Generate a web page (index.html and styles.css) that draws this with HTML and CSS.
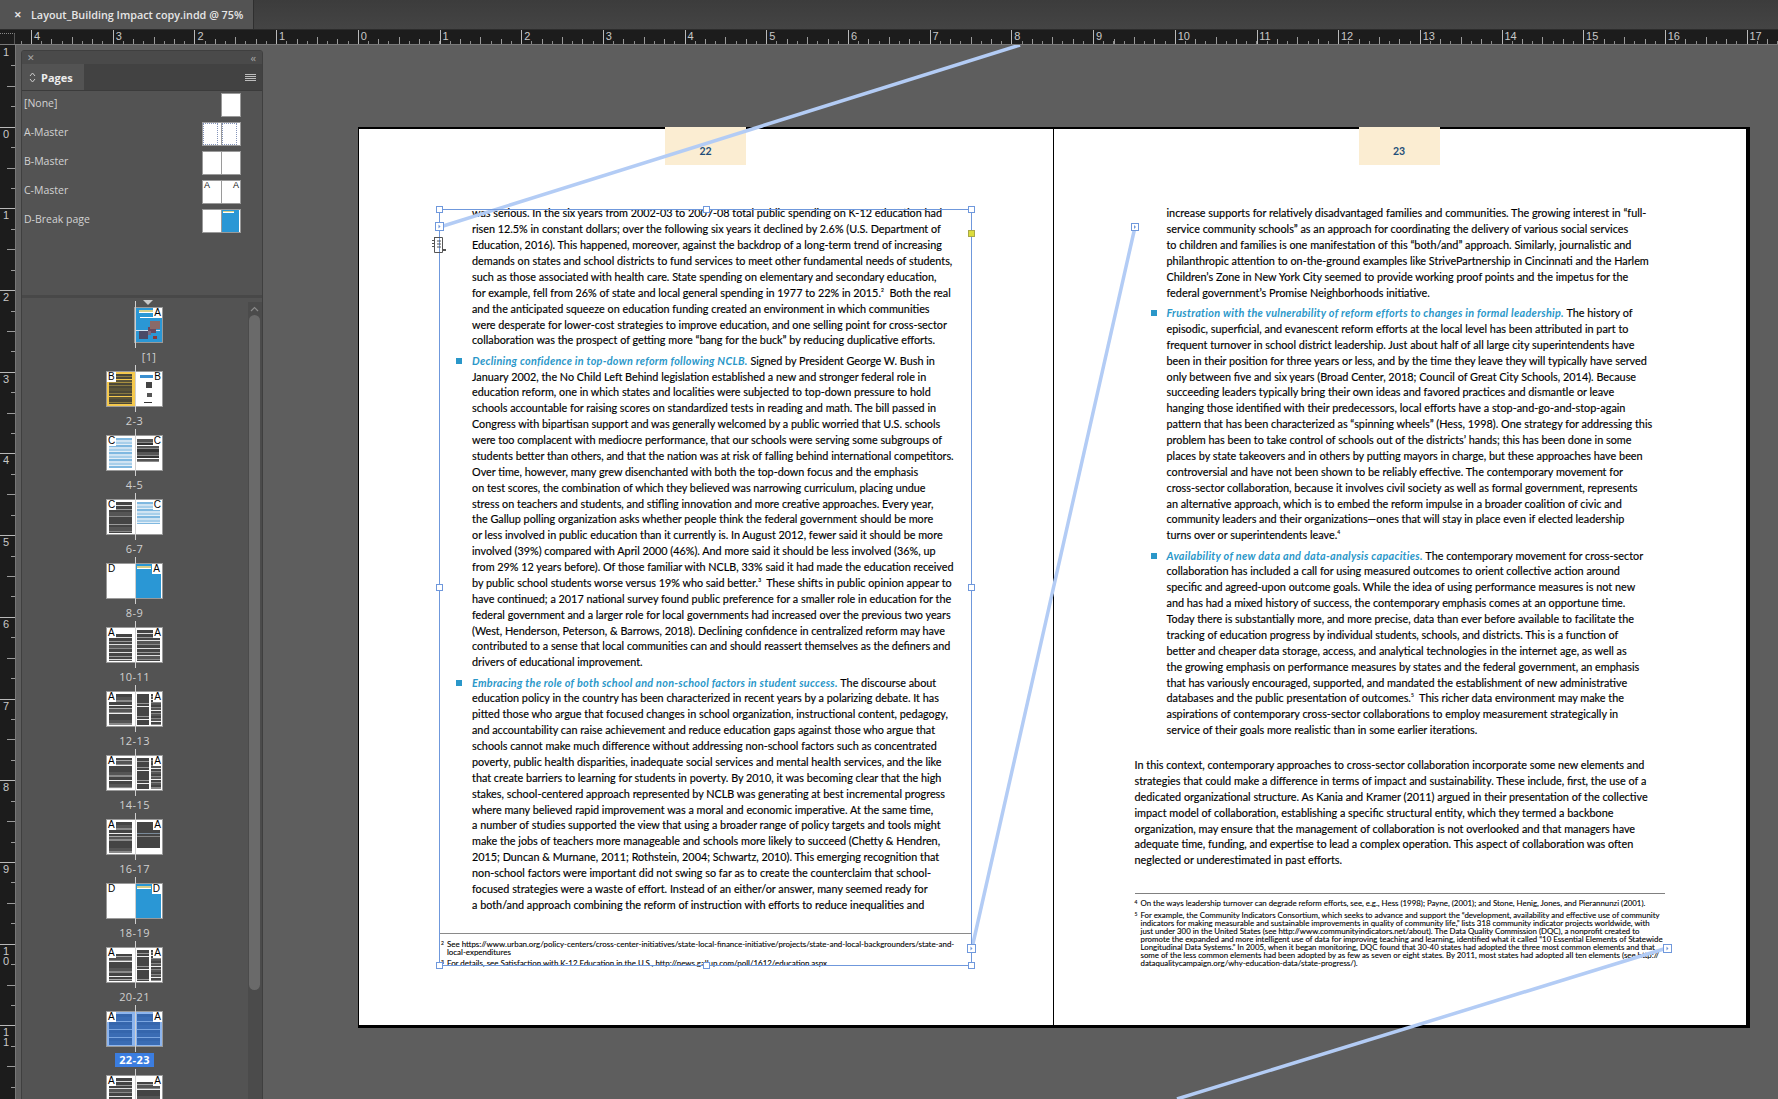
FILE: index.html
```html
<!DOCTYPE html>
<html lang="en">
<head>
<meta charset="utf-8">
<title>Layout_Building Impact copy.indd @ 75%</title>
<link rel="stylesheet" href="styles.css">
</head>
<body>
<div class="app">
  <header class="tabbar">
    <div class="doc-tab"><span class="doc-x">✕</span><span>Layout_Building Impact copy.indd @ 75%</span></div>
  </header>
  <div class="hruler">
    <div class="corner"></div>
    <div class="hticks">
      <span>4</span><span>3</span><span>2</span><span>1</span><span>0</span><span>1</span><span>2</span><span>3</span><span>4</span><span>5</span><span>6</span><span>7</span><span>8</span><span>9</span><span>10</span><span>11</span><span>12</span><span>13</span><span>14</span><span>15</span><span>16</span><span>17</span>
    </div>
  </div>
  <div class="main">
    <aside class="vruler">
      <span>1</span><span>0</span><span>1</span><span>2</span><span>3</span><span>4</span><span>5</span><span>6</span><span>7</span><span>8</span><span>9</span><span class="two">1<br>0</span><span class="two">1<br>1</span>
    </aside>
    <section class="canvas">
      <div class="panel">
        <div class="panel-top"><span class="panel-x">✕</span><span class="panel-collapse">‹‹</span></div>
        <div class="panel-tabs">
          <div class="panel-tab"><span class="updown"><svg width="7" height="11" viewBox="0 0 7 11"><path d="M1 4 3.500 1 6 4M1 7l2.500 3L6 7" fill="none" stroke="#ccc"/></svg></span>Pages</div>
          <div class="panel-menu"><i></i><i></i><i></i><i></i></div>
        </div>
        <div class="masters">
          <div class="master"><span>[None]</span><div class="mthumb"><b class="mp"></b></div></div>
          <div class="master"><span>A-Master</span><div class="mthumb"><b class="mp dots"></b><b class="mp dots"></b></div></div>
          <div class="master"><span>B-Master</span><div class="mthumb"><b class="mp"></b><b class="mp"></b></div></div>
          <div class="master"><span>C-Master</span><div class="mthumb"><b class="mp">A</b><b class="mp right">A</b></div></div>
          <div class="master"><span>D-Break page</span><div class="mthumb"><b class="mp"></b><b class="mp blue"><em></em></b></div></div>
        </div>
        <div class="pages">
          <div class="scrollbar"><div class="scroll-up"><svg width="9" height="6" viewBox="0 0 9 6"><path d="M1 5 4.500 1.500 8 5" fill="none" stroke="#8a8a8a" stroke-width="1.200"/></svg></div><div class="scroll-thumb"></div></div>
          <div class="spreads">
            <div class="spread first"><div class="marker"></div><div class="sp"><div class="pg ghost"></div><div class="pg cover"><u></u><s class="pic a"></s><s class="pic b"></s><s class="pic c"></s><b class="ml r">A</b></div></div><label>[1]</label></div>
            <div class="spread"><div class="sp"><div class="pg yellow"><b class="ml">B</b></div><div class="pg sparse"><b class="ml r">B</b></div></div><label>2-3</label></div>
            <div class="spread"><div class="sp"><div class="pg paleblue"><b class="ml">C</b></div><div class="pg short"><b class="ml r">C</b></div></div><label>4-5</label></div>
            <div class="spread"><div class="sp"><div class="pg dark"><b class="ml">C</b></div><div class="pg paleblue short2"><b class="ml r">C</b></div></div><label>6-7</label></div>
            <div class="spread"><div class="sp"><div class="pg"><b class="ml">D</b></div><div class="pg blue"><em></em><b class="ml r">A</b></div></div><label>8-9</label></div>
            <div class="spread"><div class="sp"><div class="pg dark head"><b class="ml">A</b></div><div class="pg dark"><b class="ml r">A</b></div></div><label>10-11</label></div>
            <div class="spread"><div class="sp"><div class="pg dark gray"><b class="ml">A</b></div><div class="pg cols"><b class="ml r">A</b></div></div><label>12-13</label></div>
            <div class="spread"><div class="sp"><div class="pg dark gray"><b class="ml">A</b></div><div class="pg cols"><b class="ml r">A</b></div></div><label>14-15</label></div>
            <div class="spread"><div class="sp"><div class="pg dark gray"><b class="ml">A</b></div><div class="pg short3"><b class="ml r">A</b></div></div><label>16-17</label></div>
            <div class="spread"><div class="sp"><div class="pg"><b class="ml">D</b></div><div class="pg blue"><em></em><b class="ml r">D</b></div></div><label>18-19</label></div>
            <div class="spread"><div class="sp"><div class="pg dark gray head"><b class="ml">A</b></div><div class="pg cols"><b class="ml r">A</b></div></div><label>20-21</label></div>
            <div class="spread sel"><div class="sp"><div class="pg dark"><b class="ml">A</b></div><div class="pg dark"><b class="ml r">A</b></div></div><label>22-23</label></div>
            <div class="spread"><div class="sp"><div class="pg dark"><b class="ml">A</b></div><div class="pg dark gray head"><b class="ml r">A</b></div></div></div>
          </div>
        </div>
      </div>

      <div class="doc">
        <article class="page left">
          <div class="folio">22</div>
          <div class="flow">
            <p>was serious. In the six years from 2002-03 to 2007-08 total public spending on K-12 education had</p>
            <p>risen 12.5% in constant dollars; over the following six years it declined by 2.6% (U.S. Department of</p>
            <p>Education, 2016). This happened, moreover, against the backdrop of a long-term trend of increasing</p>
            <p>demands on states and school districts to fund services to meet other fundamental needs of students,</p>
            <p>such as those associated with health care. State spending on elementary and secondary education,</p>
            <p>for example, fell from 26% of state and local general spending in 1977 to 22% in 2015.<sup>2</sup>&nbsp; Both the real</p>
            <p>and the anticipated squeeze on education funding created an environment in which communities</p>
            <p>were desperate for lower-cost strategies to improve education, and one selling point for cross-sector</p>
            <p>collaboration was the prospect of getting more “bang for the buck” by reducing duplicative efforts.</p>
            <p class="bul"><em>Declining confidence in top-down reform following NCLB.</em> Signed by President George W. Bush in</p>
            <p>January 2002, the No Child Left Behind legislation established a new and stronger federal role in</p>
            <p>education reform, one in which states and localities were subjected to top-down pressure to hold</p>
            <p>schools accountable for raising scores on standardized tests in reading and math. The bill passed in</p>
            <p>Congress with bipartisan support and was generally welcomed by a public worried that U.S. schools</p>
            <p>were too complacent with mediocre performance, that our schools were serving some subgroups of</p>
            <p>students better than others, and that the nation was at risk of falling behind international competitors.</p>
            <p>Over time, however, many grew disenchanted with both the top-down focus and the emphasis</p>
            <p>on test scores, the combination of which they believed was narrowing curriculum, placing undue</p>
            <p>stress on teachers and students, and stifling innovation and more creative approaches. Every year,</p>
            <p>the Gallup polling organization asks whether people think the federal government should be more</p>
            <p>or less involved in public education than it currently is. In August 2012, fewer said it should be more</p>
            <p>involved (39%) compared with April 2000 (46%). And more said it should be less involved (36%, up</p>
            <p>from 29% 12 years before). Of those familiar with NCLB, 33% said it had made the education received</p>
            <p>by public school students worse versus 19% who said better.<sup>3</sup>&nbsp; These shifts in public opinion appear to</p>
            <p>have continued; a 2017 national survey found public preference for a smaller role in education for the</p>
            <p>federal government and a larger role for local governments had increased over the previous two years</p>
            <p>(West, Henderson, Peterson, &amp; Barrows, 2018). Declining confidence in centralized reform may have</p>
            <p>contributed to a sense that local communities can and should reassert themselves as the definers and</p>
            <p>drivers of educational improvement.</p>
            <p class="bul"><em>Embracing the role of both school and non-school factors in student success.</em> The discourse about</p>
            <p>education policy in the country has been characterized in recent years by a polarizing debate. It has</p>
            <p>pitted those who argue that focused changes in school organization, instructional content, pedagogy,</p>
            <p>and accountability can raise achievement and reduce education gaps against those who argue that</p>
            <p>schools cannot make much difference without addressing non-school factors such as concentrated</p>
            <p>poverty, public health disparities, inadequate social services and mental health services, and the like</p>
            <p>that create barriers to learning for students in poverty. By 2010, it was becoming clear that the high</p>
            <p>stakes, school-centered approach represented by NCLB was generating at best incremental progress</p>
            <p>where many believed rapid improvement was a moral and economic imperative. At the same time,</p>
            <p>a number of studies supported the view that using a broader range of policy targets and tools might</p>
            <p>make the jobs of teachers more manageable and schools more likely to succeed (Chetty &amp; Hendren,</p>
            <p>2015; Duncan &amp; Murnane, 2011; Rothstein, 2004; Schwartz, 2010). This emerging recognition that</p>
            <p>non-school factors were important did not swing so far as to create the counterclaim that school-</p>
            <p>focused strategies were a waste of effort. Instead of an either/or answer, many seemed ready for</p>
            <p>a both/and approach combining the reform of instruction with efforts to reduce inequalities and</p>
          </div>
          <div class="notes notes-left">
            <div class="note"><sup>2</sup><div>See https://www.urban.org/policy-centers/cross-center-initiatives/state-local-finance-initiative/projects/state-and-local-backgrounders/state-and-<br>local-expenditures</div></div>
            <div class="note"><sup>3</sup><div>For details, see Satisfaction with K-12 Education in the U.S., http://news.gallup.com/poll/1612/education.aspx</div></div>
          </div>
        </article>
        <article class="page right">
          <div class="folio">23</div>
          <div class="flow indented">
            <p>increase supports for relatively disadvantaged families and communities. The growing interest in “full-</p>
            <p>service community schools” as an approach for coordinating the delivery of various social services</p>
            <p>to children and families is one manifestation of this “both/and” approach. Similarly, journalistic and</p>
            <p>philanthropic attention to on-the-ground examples like StrivePartnership in Cincinnati and the Harlem</p>
            <p>Children’s Zone in New York City seemed to provide working proof points and the impetus for the</p>
            <p>federal government’s Promise Neighborhoods initiative.</p>
            <p class="bul"><em>Frustration with the vulnerability of reform efforts to changes in formal leadership.</em> The history of</p>
            <p>episodic, superficial, and evanescent reform efforts at the local level has been attributed in part to</p>
            <p>frequent turnover in school district leadership. Just about half of all large city superintendents have</p>
            <p>been in their position for three years or less, and by the time they leave they will typically have served</p>
            <p>only between five and six years (Broad Center, 2018; Council of Great City Schools, 2014). Because</p>
            <p>succeeding leaders typically bring their own ideas and favored practices and dismantle or leave</p>
            <p>hanging those identified with their predecessors, local efforts have a stop-and-go-and-stop-again</p>
            <p>pattern that has been characterized as “spinning wheels” (Hess, 1998). One strategy for addressing this</p>
            <p>problem has been to take control of schools out of the districts’ hands; this has been done in some</p>
            <p>places by state takeovers and in others by putting mayors in charge, but these approaches have been</p>
            <p>controversial and have not been shown to be reliably effective. The contemporary movement for</p>
            <p>cross-sector collaboration, because it involves civil society as well as formal government, represents</p>
            <p>an alternative approach, which is to embed the reform impulse in a broader coalition of civic and</p>
            <p>community leaders and their organizations—ones that will stay in place even if elected leadership</p>
            <p>turns over or superintendents leave.<sup>4</sup></p>
            <p class="bul"><em>Availability of new data and data-analysis capacities.</em> The contemporary movement for cross-sector</p>
            <p>collaboration has included a call for using measured outcomes to orient collective action around</p>
            <p>specific and agreed-upon outcome goals. While the idea of using performance measures is not new</p>
            <p>and has had a mixed history of success, the contemporary emphasis comes at an opportune time.</p>
            <p>Today there is substantially more, and more precise, data than ever before available to facilitate the</p>
            <p>tracking of education progress by individual students, schools, and districts. This is a function of</p>
            <p>better and cheaper data storage, access, and analytical technologies in the internet age, as well as</p>
            <p>the growing emphasis on performance measures by states and the federal government, an emphasis</p>
            <p>that has variously encouraged, supported, and mandated the establishment of new administrative</p>
            <p>databases and the public presentation of outcomes.<sup>5</sup>&nbsp; This richer data environment may make the</p>
            <p>aspirations of contemporary cross-sector collaborations to employ measurement strategically in</p>
            <p>service of their goals more realistic than in some earlier iterations.</p>
          </div>
          <div class="flow closing">
            <p>In this context, contemporary approaches to cross-sector collaboration incorporate some new elements and</p>
            <p>strategies that could make a difference in terms of impact and sustainability. These include, first, the use of a</p>
            <p>dedicated organizational structure. As Kania and Kramer (2011) argued in their presentation of the collective</p>
            <p>impact model of collaboration, establishing a specific structural entity, which they termed a backbone</p>
            <p>organization, may ensure that the management of collaboration is not overlooked and that managers have</p>
            <p>adequate time, funding, and expertise to lead a complex operation. This aspect of collaboration was often</p>
            <p>neglected or underestimated in past efforts.</p>
          </div>
          <div class="notes notes-right">
            <div class="note"><sup>4</sup><div>On the ways leadership turnover can degrade reform efforts, see, e.g., Hess (1998); Payne, (2001); and Stone, Henig, Jones, and Pierannunzi (2001).</div></div>
            <div class="note gap"><sup>5</sup><div>For example, the Community Indicators Consortium, which seeks to advance and support the “development, availability and effective use of community<br>indicators for making measurable and sustainable improvements in quality of community life,” lists 318 community indicator projects worldwide, with<br>just under 300 in the United States (see http://www.communityindicators.net/about). The Data Quality Commission (DQC), a nonprofit created to<br>promote the expanded and more intelligent use of data for improving teaching and learning, identified what it called “10 Essential Elements of Statewide<br>Longitudinal Data Systems.” In 2005, when it began monitoring, DQC found that 30-40 states had adopted the three most common elements and that<br>some of the less common elements had been adopted by as few as seven or eight states. By 2011, most states had adopted all ten elements (see http://<br>dataqualitycampaign.org/why-education-data/state-progress/).</div></div>
          </div>
        </article>
      </div>

      <svg class="threads" width="1762" height="1054" viewBox="0 0 1762 1054">
        <g fill="none" stroke="#b3ccf5" stroke-width="3.500">
          <path d="M424 182 1004 0"/>
          <path d="M956 903 1119 182"/>
          <path d="M1651 903 1161 1054"/>
        </g>
        <g fill="none" stroke="#6f98dc">
          <path d="M423.500 164.500H955.500V920.500H423.500Z"/>
          <path d="M424 888.500H955" stroke="#8a8a8a"/>
        </g>
        <g fill="#fff" stroke="#6f98dc">
          <rect x="420.500" y="161.500" width="6" height="6"/><rect x="687.500" y="161.500" width="6" height="6"/><rect x="952.500" y="161.500" width="6" height="6"/>
          <rect x="420.500" y="539.500" width="6" height="6"/><rect x="952.500" y="539.500" width="6" height="6"/>
          <rect x="420.500" y="917.500" width="6" height="6"/><rect x="687.500" y="917.500" width="6" height="6"/><rect x="952.500" y="917.500" width="6" height="6"/>
          <rect x="952.500" y="185.500" width="6" height="6" fill="#dcdc3c" stroke="#a8a848"/>
          <rect x="419.500" y="177.500" width="8" height="8"/>
          <rect x="951.500" y="899.500" width="8" height="8"/>
          <rect x="1115.500" y="178.500" width="7" height="7"/>
          <rect x="1647.500" y="899.500" width="8" height="8"/>
        </g>
        <g fill="#6f98dc">
          <path d="M422.500 179.500v4l2-2zM954.500 901.500v4l2-2zM1118 180v4l2-2zM1650.500 901.500v4l2-2z"/>
        </g>
        <g fill="none" stroke="#555">
          <path d="M418 192.500h8.500v15h-8v-15M419 195.500h-3M419 198.500h-3M419 201.500h-3M421 196h4M421 199h4M421 202h4"/>
          <path d="M426 205h4" stroke-width="2"/>
        </g>
      </svg>
    </section>
  </div>
</div>
</body>
</html>
```
FILE: styles.css
```css
* { box-sizing: border-box; }
html, body { margin: 0; height: 100%; overflow: hidden; background: #5e5e5e; }
body { font-family: "Open Sans", "Liberation Sans", sans-serif; }
.app { width: 1778px; height: 1099px; display: flex; flex-direction: column; overflow: hidden; }

.tabbar { height: 30px; flex: none; background: linear-gradient(#3c3c3c, #444); border-bottom: 1px solid #2c2c2c; display: flex; }
.doc-tab { width: 254px; height: 29px; background: #535353; border-right: 1px solid #2f2f2f; display: flex; align-items: center; padding-left: 14px; color: #e6e6e6; font-size: 10.800px; font-weight: 600; white-space: nowrap; }
.doc-x { font-size: 9px; margin-right: 9px; }

.hruler { height: 15px; flex: none; display: flex; background: #1c1c1c; border-bottom: 1px solid #7a7a7a; }
.corner { width: 15px; flex: none; border-right: 1px solid #555; border-top: 1px dotted #888; margin: 3px 0 0; }
.hticks { flex: 1; display: flex; padding-left: 16px; overflow: hidden; background-color: #1c1c1c;
  background-image:
    repeating-linear-gradient(90deg, #b8b8b8 0 1px, transparent 1px 81.700px),
    repeating-linear-gradient(90deg, #9a9a9a 0 1px, transparent 1px 40.850px),
    repeating-linear-gradient(90deg, #9a9a9a 0 1px, transparent 1px 20.425px),
    repeating-linear-gradient(90deg, #8c8c8c 0 1px, transparent 1px 10.212px);
  background-size: calc(100% + 82px) 100%, calc(100% + 82px) 7px, calc(100% + 82px) 5px, calc(100% + 82px) 3px;
  background-position: -65.700px 0, -65.700px bottom, -65.700px bottom, -65.700px bottom;
  background-repeat: no-repeat; }
.hticks span { width: 81.700px; flex: none; padding-left: 3px; font-size: 11px; line-height: 12px; color: #c8c8c8; font-family: "Liberation Sans", sans-serif; }

.main { flex: 1; display: flex; min-height: 0; }
.vruler { width: 16px; flex: none; background-color: #1c1c1c; border-right: 1px solid #777; display: flex; flex-direction: column; padding-top: 1px;
  background-image:
    repeating-linear-gradient(180deg, transparent 0 80.700px, #b8b8b8 80.700px 81.700px),
    repeating-linear-gradient(180deg, transparent 0 39.850px, #9a9a9a 39.850px 40.850px),
    repeating-linear-gradient(180deg, transparent 0 19.425px, #9a9a9a 19.425px 20.425px);
  background-size: 100% 100%, 8px 100%, 4px 100%;
  background-position: 0 1.300px, right 1.300px, right 1.300px;
  background-repeat: no-repeat; }
.vruler span { height: 81.700px; flex: none; padding: 1px 0 0 3px; font-size: 11px; line-height: 10px; color: #c8c8c8; font-family: "Liberation Sans", sans-serif; }

.canvas { flex: 1; position: relative; background: #5e5e5e; display: flex; padding: 82px 0 0 342px; }

.panel { position: absolute; left: 5px; top: 5px; width: 242px; bottom: -4px; background: #535353; border: 1px solid #3f3f3f; border-radius: 3px 3px 0 0; display: flex; flex-direction: column; color: #d8d8d8; overflow: hidden; }
.panel-top { height: 13px; flex: none; background: #4a4a4a; display: flex; justify-content: space-between; align-items: center; padding: 0 7px 0 5px; font-size: 9px; color: #a8a8a8; }
.panel-collapse { font-size: 11px; letter-spacing: -1px; line-height: 10px; }
.panel-tabs { height: 27px; flex: none; background: #424242; display: flex; justify-content: space-between; border-bottom: 1px solid #3b3b3b; }
.panel-tab { width: 62px; background: #535353; display: flex; align-items: center; padding-left: 7px; gap: 5px; font-size: 11px; font-weight: 700; color: #ececec; }
.updown { display: flex; }
.panel-menu { width: 11px; margin: 10px 6px 0 0; display: flex; flex-direction: column; gap: 1px; }
.panel-menu i { height: 1px; background: #bdbdbd; }
.masters { height: 207px; flex: none; border-bottom: 3px solid #484848; padding-top: 1px; display: flex; flex-direction: column; gap: 6px; }
.master { height: 23px; flex: none; display: flex; align-items: center; justify-content: space-between; padding: 0 21px 0 2px; font-size: 10.500px; color: #d2d2d2; }
.master span { margin-bottom: 2px; }
.mthumb { display: flex; justify-content: flex-end; gap: 1px; background: #9a9a9a; border: 1px solid #9a9a9a; height: 24px; margin-top: 2px; }
.mp { width: 18px; height: 22px; background: #fff; display: block; position: relative; font: 400 9px/9px "Liberation Sans", sans-serif; color: #111; padding-left: 1px; }
.mp.right { text-align: right; padding: 0 1px 0 0; }
.mp.dots::after { content: ""; position: absolute; inset: 0 3px 0 0; border: 1px dotted #8494ba; }
.mp.blue { background: #2a97d5; border-right: 1px solid #fff; }
.mp.blue em { position: absolute; left: 1px; top: 1px; width: 11px; height: 2px; background: #d6cf8a; border-bottom: 1px solid #fff; }

.pages { flex: 1; position: relative; background: #535353; min-height: 0; }
.scrollbar { position: absolute; right: 0; top: 4px; bottom: 0; width: 14px; padding: 0 2px 0 1px; background: #4b4b4b; }
.scroll-up { height: 13px; display: flex; justify-content: center; align-items: center; }
.scroll-thumb { height: 675px; background: #6a6a6a; border-radius: 6px; }
.spreads { display: flex; flex-direction: column; align-items: center; padding: 8px 0 0 0; width: 225px; }
.spread { height: 64px; flex: none; display: flex; flex-direction: column; align-items: center; position: relative; width: 100%; }
.marker { position: absolute; left: 121px; top: -6px; width: 0; height: 0; border: 5px solid transparent; border-top-color: #c9c9c9; border-bottom: 0; }
.sp { display: flex; height: 36px; border: 1px solid #9a9a9a; position: relative; margin-top: 1px; }
.first .sp { border-color: transparent; }
.first .cover { box-shadow: 0 0 0 1px #9a9a9a; overflow: visible; }
.sp::after { content: ""; position: absolute; left: 50%; top: -7px; bottom: -6px; width: 1px; background: #cfcfcf; }
.first label { padding-left: 29px; }
.spread label { font-size: 11px; line-height: 14px; margin-top: 7px; letter-spacing: .4px; color: #d0d0d0; }
.spread.sel label { background: #3b7de0; color: #fff; font-weight: 700; padding: 0 4px; margin-top: 6px; height: 14px; }
.pg { width: 27.500px; height: 34px; background: #fff; position: relative; overflow: hidden; }
.pg.ghost { background: transparent; }
.ml { position: absolute; left: 0; top: 0; font: 400 10px/10px "Liberation Sans", sans-serif; color: #000; background: #fff; padding: 0 1px; }
.ml.r { left: auto; right: 0; }
.pg.cover { background: #2a97d5; }
.pg.cover u { position: absolute; left: 4px; top: 2px; width: 16px; height: 3px; background: #d6cf8a; border-bottom: 1px solid #fff; box-shadow: 0 6px 0 -1px #fff, -4px 19px 0 -1px #cfe3f2, 6px 19px 0 -1px #cfe3f2; }
.pic { position: absolute; display: block; }
.pic.a { left: 15px; top: 13px; width: 10px; height: 8px; background: #8a6a68; box-shadow: -3px 5px 0 -1px #6a4a60; }
.pic.b { left: 4px; top: 23px; width: 9px; height: 8px; background: #4a4a68; box-shadow: 5px -2px 0 -2px #7a6a80; }
.pic.c { left: 18px; top: 28px; width: 4px; height: 3px; background: #8a3a3a; }
.pg.yellow { background-color: #f5c94e; background-image: repeating-linear-gradient(180deg, #4b4838 0 2px, #8a7a40 2px 3px, #4b4838 3px 5px, #f5c94e 5px 5.500px, #5a5438 5.500px 8px, #a89040 8px 8.500px); background-size: 23px 30px; background-position: 2px 2px; background-repeat: no-repeat; }
.pg.sparse { background-image: linear-gradient(#3a8fd0, #3a8fd0), linear-gradient(#444, #444), linear-gradient(#555, #555), linear-gradient(#333, #333); background-size: 15px 3px, 6px 6px, 5px 4px, 8px 1px; background-position: 5px 3px, 11px 10px, 12px 21px, 9px 30px; background-repeat: no-repeat; }
.pg.paleblue { background-image: repeating-linear-gradient(180deg, #7fb8e0 0 2px, #cfe3f2 2px 4px, #a8cfea 4px 6px, #e2eef7 6px 7px); background-size: 23px 30px; background-position: 2px 2px; background-repeat: no-repeat; }
.pg.paleblue.short2 { background-size: 23px 22px; }
.pg.dark { background-image: repeating-linear-gradient(180deg, #444 0 3px, #ddd 3px 3.500px, #444 3.500px 7px, #9a9a9a 7px 8px, #444 8px 10px, #ddd 10px 10.500px, #555 10.500px 14px, #8a8a8a 14px 15px); background-size: 23px 31px; background-position: 2px 2px; background-repeat: no-repeat; }
.pg.dark.gray { background-image: repeating-linear-gradient(180deg, #444 0 2.500px, #aaa 2.500px 3px, #555 3px 6px, #8a8a8a 6px 7.500px, #eee 7.500px 8px, #444 8px 11px, #eee 11px 11.500px); }
.pg.dark.head { background-position: 2px 6px; background-size: 23px 27px; }
.pg.short { background-image: repeating-linear-gradient(180deg, #555 0 2.500px, #8a8a8a 2.500px 3.500px, #333 3.500px 6px, #fff 6px 6.500px); background-size: 22px 23px; background-position: 2px 3px; background-repeat: no-repeat; }
.pg.short3 { background-image: repeating-linear-gradient(180deg, #444 0 4px, #7a8a9a 4px 4.500px, #444 4.500px 7px, #888 7px 7.500px); background-size: 23px 26px; background-position: 2px 2px; background-repeat: no-repeat; }
.pg.cols { background-image: repeating-linear-gradient(180deg, #444 0 3px, #999 3px 3.500px, #444 3.500px 6px, #eee 6px 6.500px), repeating-linear-gradient(180deg, #444 0 2px, #888 2px 3px, #555 3px 5px, #eee 5px 5.500px); background-size: 12px 31px, 10px 31px; background-position: 2px 2px, 16px 2px; background-repeat: no-repeat; }
.pg.blue { background: #2a97d5; border-right: 1px solid #fff; }
.pg.blue em { position: absolute; left: 2px; top: 2px; width: 14px; height: 3px; background: #d6cf8a; border-bottom: 1px solid #fff; }
.sel .pg { background-color: #8db5ee; }
.sel .pg.dark { background-image: repeating-linear-gradient(180deg, #3566ad 0 3px, #6f9ddc 3px 3.500px, #3a6cb4 3.500px 7px, #7aa5e0 7px 8px); }

.doc { display: flex; width: 1392px; height: 901px; border: 1px solid #000; border-width: 2px 4px 3px 1px; background: #fff; flex: none; }
.page { position: relative; display: flex; flex-direction: column; }
.page.left { flex: 0 0 694.500px; border-right: 1px solid #000; padding-left: 113px; }
.page.right { flex: 1; padding-left: 81px; }
.folio { position: absolute; top: -2px; width: 81px; height: 38px; background: #fbedd2; color: #1f4e79; font: 700 10.500px/48px "Lato", sans-serif; text-align: center; }
.left .folio { left: 306px; }
.right .folio { left: 305px; }
.flow { padding-top: 76.400px; }
.flow.indented { padding-left: 32px; }
.flow p { margin: 0; height: 15.880px; white-space: nowrap; font: 400 10.820px/15.880px "Lato", "Open Sans", sans-serif; color: #000; -webkit-text-stroke: .15px #000; position: relative; }
.right .flow p { font-size: 10.850px; }
.flow sup { font-size: 5px; line-height: 0; }
.flow p.bul { margin-top: 4.400px; }
.flow p.bul::before { content: ""; position: absolute; left: -16px; top: 5px; width: 6px; height: 6px; background: #2a97c9; }
.flow em { color: #2a97c9; font-style: italic; font-weight: 700; letter-spacing: .28px; -webkit-text-stroke: 0; }
.flow.closing { padding-top: 19px; }
.notes { position: absolute; color: #000; font: 400 7.870px/8px "Lato", "Open Sans", sans-serif; white-space: nowrap; -webkit-text-stroke: .1px #000; }
.note { display: flex; }
.note sup { width: 6px; font-size: 5px; line-height: 7px; flex: none; }
.notes-left { left: 82px; top: 811px; font-size: 7.920px; }
.notes-left .note + .note { margin-top: 3px; }
.notes-right { left: 81px; top: 764px; width: 530px; border-top: 1px solid #808080; padding-top: 5px; }
.note.gap { margin-top: 4px; }

.threads { position: absolute; left: 0; top: 0; pointer-events: none; }
```
